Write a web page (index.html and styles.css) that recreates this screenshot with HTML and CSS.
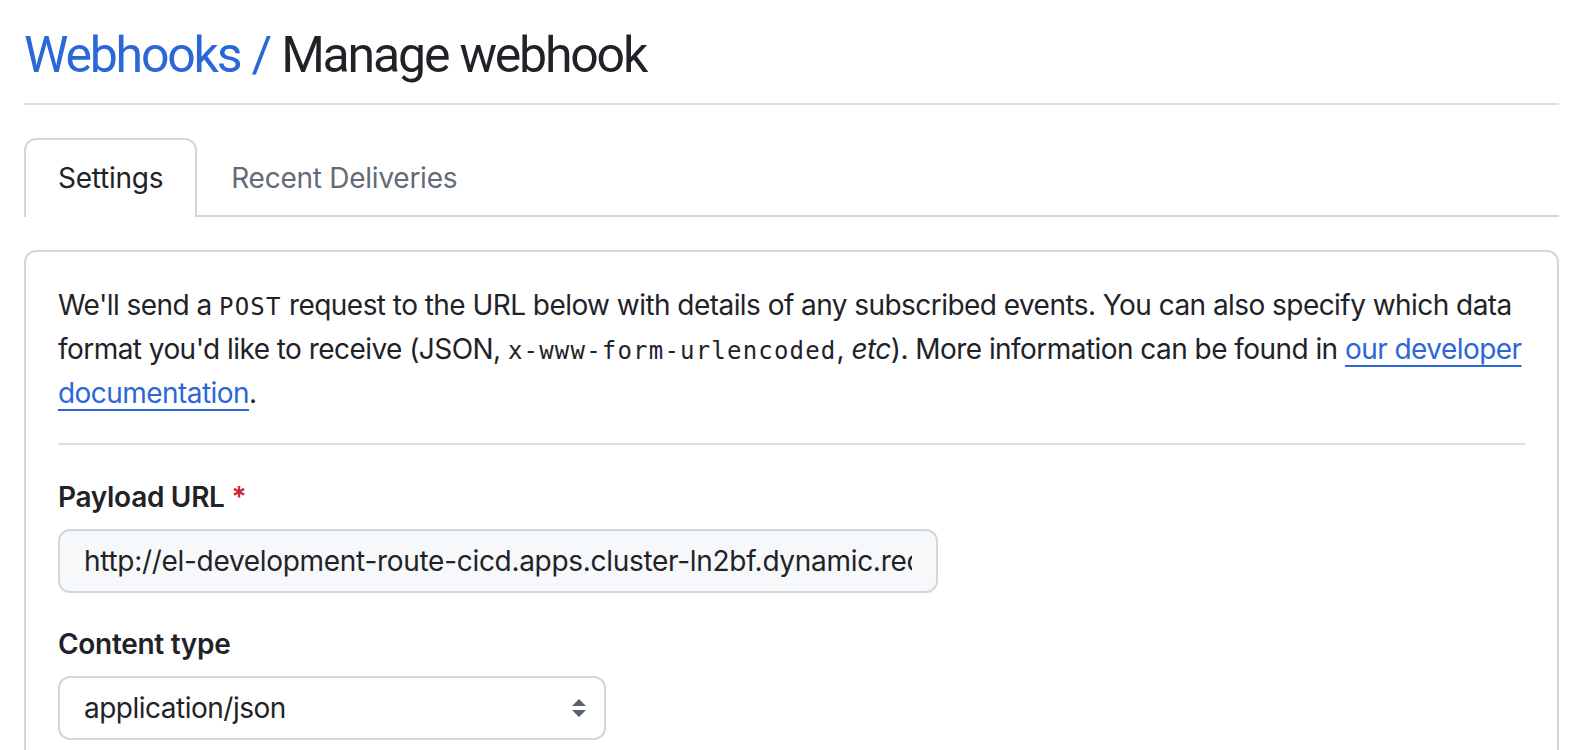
FILE: index.html
```html
<!DOCTYPE html>
<html lang="en">
<head>
<meta charset="utf-8">
<title>Manage webhook</title>
<link rel="stylesheet" href="styles.css">
</head>
<body>
<div class="page">
  <div class="subhead">
    <h2 class="subhead-heading"><a class="crumb" href="#">Webhooks</a> <span class="crumb-sep">/</span> Manage webhook</h2>
  </div>

  <nav class="tabnav">
    <a class="tab tab-selected" href="#">Settings</a>
    <a class="tab" href="#">Recent Deliveries</a>
  </nav>

  <div class="box">
    <p class="note">We'll send a <code>POST</code> request to the URL below with details of any subscribed events. You can also specify which data format you'd like to receive (JSON, <code>x-www-form-urlencoded</code>, <em>etc</em>). More information can be found in <a class="link" href="#">our developer documentation</a>.</p>
    <hr class="divider">

    <div class="form-group">
      <label class="label" for="url">Payload URL <span class="required">*</span></label>
      <input class="input" id="url" type="text" value="http://el-development-route-cicd.apps.cluster-ln2bf.dynamic.redhatworkshops.io">
    </div>

    <div class="form-group">
      <label class="label">Content type</label>
      <div class="select">
        <span>application/json</span>
        <svg class="select-arrow" width="16" height="18" viewBox="0 0 16 18"><path d="M8 0 L15 7 L1 7 Z M1 11 L15 11 L8 18 Z" fill="#59636e"/></svg>
      </div>
    </div>
  </div>
</div>
</body>
</html>
```

FILE: styles.css
```css
* { box-sizing: border-box; }

html, body {
  margin: 0;
  padding: 0;
  background: #ffffff;
}

body {
  font-family: Inter, "Noto Sans", "Liberation Sans", sans-serif;
  color: #1f2328;
  font-size: 28px;
  line-height: 42px;
}

.page {
  padding: 19px 21px 0 24px;
}

.subhead {
  border-bottom: 2px solid #d8dee4;
  padding-bottom: 12px;
}

.subhead-heading {
  margin: 0;
  font-family: Roboto, Inter, "Liberation Sans", sans-serif;
  font-size: 50px;
  font-weight: 400;
  line-height: 72px;
  color: #1f2328;
  letter-spacing: -2.2px;
  word-spacing: 1px;
}

.crumb,
.crumb-sep {
  color: #2c67d8;
  text-decoration: none;
}

.tabnav {
  margin-top: 33px;
  display: flex;
  border-bottom: 2px solid #d0d7de;
}

.tab {
  display: block;
  padding: 16px 32px;
  line-height: 45px;
  font-size: 28px;
  color: #636c76;
  text-decoration: none;
  border: 2px solid transparent;
  border-bottom: 0;
  border-radius: 12px 12px 0 0;
  margin-bottom: -2px;
  letter-spacing: -0.25px;
}

.tab-selected {
  color: #1f2328;
  background: #ffffff;
  border-color: #d0d7de;
}

.box {
  margin-top: 33px;
  border: 2px solid #d0d7de;
  border-radius: 12px;
  padding: 32px 32px 0 32px;
  height: 520px;
}

.note {
  margin: 0;
  letter-spacing: -0.55px;
}

.note code {
  font-family: "DejaVu Sans Mono", "Liberation Mono", monospace;
  font-size: 24px;
  letter-spacing: 1.2px;
}

.link {
  color: #2c67d8;
  text-decoration: underline;
  text-underline-offset: 6px;
  text-decoration-thickness: 2px;
}

.divider {
  margin: 29px 0 0 0;
  border: 0;
  border-top: 2px solid #d8dee4;
  height: 0;
}

.form-group {
  margin-top: 32px;
}

.form-group + .form-group {
  margin-top: 31px;
}

.label {
  display: block;
  font-weight: 600;
  line-height: 40px;
  margin-bottom: 12px;
  letter-spacing: -0.3px;
}

.required {
  color: #d1242f;
}

.input {
  display: block;
  width: 880px;
  height: 64px;
  padding: 10px 24px;
  font-family: Inter, "Noto Sans", "Liberation Sans", sans-serif;
  font-size: 28px;
  line-height: 40px;
  color: #1f2328;
  background: #f6f8fa;
  border: 2px solid #d0d7de;
  border-radius: 12px;
  outline: none;
  letter-spacing: -0.3px;
}

.select {
  width: 548px;
  height: 64px;
  padding: 10px 17px 10px 24px;
  display: flex;
  align-items: center;
  justify-content: space-between;
  background: #ffffff;
  border: 2px solid #d0d7de;
  border-radius: 12px;
  letter-spacing: -0.5px;
}

.select-arrow {
  display: block;
}
```
